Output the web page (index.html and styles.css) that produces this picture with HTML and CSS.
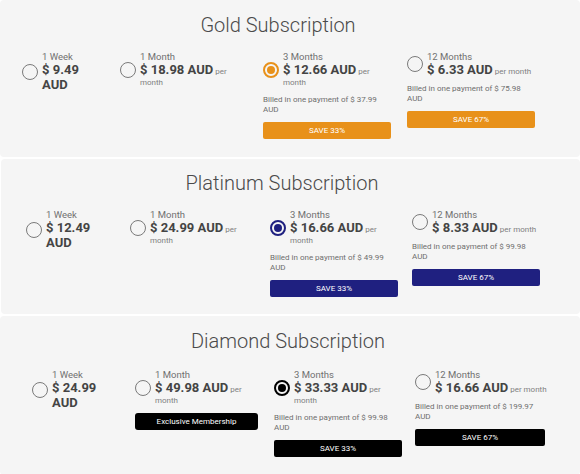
FILE: index.html
```html
<!DOCTYPE html>
<html lang="en">
<head>
<meta charset="utf-8">
<title>Subscriptions</title>
<link rel="stylesheet" href="styles.css">
</head>
<body>
<section class="card card-gold">
  <h2 class="title">Gold Subscription</h2>
  <div class="options">
    <div class="opt opt-first">
      <div class="head"><span class="radio"></span><div class="txt"><div class="term">1 Week</div><div class="price"><b>$ 9.49 AUD</b></div></div></div>
    </div>
    <div class="opt">
      <div class="head"><span class="radio"></span><div class="txt"><div class="term">1 Month</div><div class="price"><b>$ 18.98 AUD</b> <span class="per">per month</span></div></div></div>
    </div>
    <div class="opt">
      <div class="head"><span class="radio checked"></span><div class="txt"><div class="term">3 Months</div><div class="price"><b>$ 12.66 AUD</b> <span class="per">per month</span></div></div></div>
      <p class="billed">Billed in one payment of $ 37.99 AUD</p>
      <div class="btn">SAVE 33%</div>
    </div>
    <div class="opt">
      <div class="head"><span class="radio"></span><div class="txt"><div class="term">12 Months</div><div class="price"><b>$ 6.33 AUD</b> <span class="per">per month</span></div></div></div>
      <p class="billed">Billed in one payment of $ 75.98 AUD</p>
      <div class="btn">SAVE 67%</div>
    </div>
  </div>
</section>

<section class="card card-platinum">
  <h2 class="title">Platinum Subscription</h2>
  <div class="options">
    <div class="opt opt-first">
      <div class="head"><span class="radio"></span><div class="txt"><div class="term">1 Week</div><div class="price"><b>$ 12.49 AUD</b></div></div></div>
    </div>
    <div class="opt">
      <div class="head"><span class="radio"></span><div class="txt"><div class="term">1 Month</div><div class="price"><b>$ 24.99 AUD</b> <span class="per">per month</span></div></div></div>
    </div>
    <div class="opt">
      <div class="head"><span class="radio checked"></span><div class="txt"><div class="term">3 Months</div><div class="price"><b>$ 16.66 AUD</b> <span class="per">per month</span></div></div></div>
      <p class="billed">Billed in one payment of $ 49.99 AUD</p>
      <div class="btn">SAVE 33%</div>
    </div>
    <div class="opt">
      <div class="head"><span class="radio"></span><div class="txt"><div class="term">12 Months</div><div class="price"><b>$ 8.33 AUD</b> <span class="per">per month</span></div></div></div>
      <p class="billed">Billed in one payment of $ 99.98 AUD</p>
      <div class="btn">SAVE 67%</div>
    </div>
  </div>
</section>

<section class="card card-diamond">
  <h2 class="title">Diamond Subscription</h2>
  <div class="options">
    <div class="opt opt-first">
      <div class="head"><span class="radio"></span><div class="txt"><div class="term">1 Week</div><div class="price"><b>$ 24.99 AUD</b></div></div></div>
    </div>
    <div class="opt">
      <div class="head"><span class="radio"></span><div class="txt"><div class="term">1 Month</div><div class="price"><b>$ 49.98 AUD</b> <span class="per">per month</span></div></div></div>
      <div class="btn btn-exclusive">Exclusive Membership</div>
    </div>
    <div class="opt">
      <div class="head"><span class="radio checked"></span><div class="txt"><div class="term">3 Months</div><div class="price"><b>$ 33.33 AUD</b> <span class="per">per month</span></div></div></div>
      <p class="billed">Billed in one payment of $ 99.98 AUD</p>
      <div class="btn">SAVE 33%</div>
    </div>
    <div class="opt opt-wide">
      <div class="head"><span class="radio"></span><div class="txt"><div class="term">12 Months</div><div class="price"><b>$ 16.66 AUD</b> <span class="per">per month</span></div></div></div>
      <p class="billed">Billed in one payment of $ 199.97 AUD</p>
      <div class="btn">SAVE 67%</div>
    </div>
  </div>
</section>
</body>
</html>
```

FILE: styles.css
```css
html, body {
  margin: 0;
  padding: 0;
  background: #ffffff;
  font-family: "Roboto", "Liberation Sans", sans-serif;
}

.card {
  background: #f5f5f5;
  box-sizing: border-box;
  border-radius: 4px;
  padding-top: 12px;
}

.card-gold { height: 157px; margin-bottom: 2px; --accent: #e8911a; }
.card-platinum { height: 155px; margin: 0 0 2px 1px; padding-top: 11px; --accent: #1f2080; }
.card-diamond { height: 159px; --accent: #000000; padding-top: 12px; }

.title {
  margin: 0;
  font-weight: 300;
  font-size: 20px;
  line-height: 26px;
  color: #4a4a4a;
  text-align: center;
}

.card-gold .title { padding-right: 24px; }
.card-platinum .title { padding-right: 17px; }
.card-diamond .title { padding-right: 4px; }

.options {
  display: grid;
  align-items: start;
  margin-top: 13px;
}

.card-gold .options { grid-template-columns: 98px 143px 144px 128px; padding-left: 22px; }
.card-platinum .options { grid-template-columns: 104px 140px 142px 128px; padding-left: 25px; }
.card-diamond .options { grid-template-columns: 103px 139px 141px 130px; padding-left: 32px; margin-top: 15px; }

.opt { width: 128px; }
.opt-first { width: 80px; }
.opt-wide { width: 130px; }
.opt-wide .txt { margin-right: -10px; }

.head {
  display: flex;
  align-items: center;
  gap: 4px;
}

.radio {
  flex: none;
  width: 16px;
  height: 16px;
  box-sizing: border-box;
  border: 1.5px solid #7a7a7a;
  border-radius: 50%;
  position: relative;
}

.radio.checked {
  border: 2px solid var(--accent);
}

.radio.checked::after {
  content: "";
  position: absolute;
  left: 2px;
  top: 2px;
  width: 8px;
  height: 8px;
  border-radius: 50%;
  background: var(--accent);
}

.txt { flex: 1; min-width: 0; }

.term {
  font-size: 9.5px;
  line-height: 11px;
  color: #707070;
}

.price {
  font-size: 8px;
  line-height: 11px;
  color: #444;
}

.price b {
  font-size: 13px;
  line-height: 15px;
  font-weight: 700;
}

.per {
  color: #808080;
}

.billed {
  margin: 7px 0 0;
  font-size: 8px;
  line-height: 10px;
  color: #6e6e6e;
}

.btn {
  margin-top: 7px;
  height: 17px;
  line-height: 17px;
  border-radius: 2px;
  background: var(--accent);
  color: #fff;
  font-size: 8px;
  font-weight: 400;
  text-align: center;
}

.btn-exclusive {
  margin-top: 7px;
  width: 123px;
  border-radius: 3px;
  background: #000;
}
```
